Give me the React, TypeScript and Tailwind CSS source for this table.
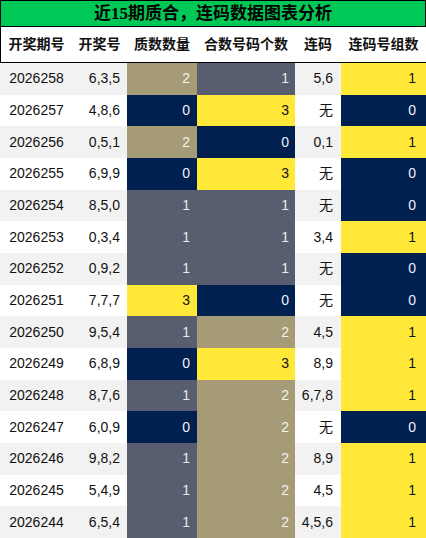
import React from 'react';

type Row = {
  qh: string;
  kj: string;
  zs: number;
  hs: number;
  lm: string;
  zu: number;
};

const rows: Row[] = [
  { qh: '2026258', kj: '6,3,5', zs: 2, hs: 1, lm: '5,6', zu: 1 },
  { qh: '2026257', kj: '4,8,6', zs: 0, hs: 3, lm: '无', zu: 0 },
  { qh: '2026256', kj: '0,5,1', zs: 2, hs: 0, lm: '0,1', zu: 1 },
  { qh: '2026255', kj: '6,9,9', zs: 0, hs: 3, lm: '无', zu: 0 },
  { qh: '2026254', kj: '8,5,0', zs: 1, hs: 1, lm: '无', zu: 0 },
  { qh: '2026253', kj: '0,3,4', zs: 1, hs: 1, lm: '3,4', zu: 1 },
  { qh: '2026252', kj: '0,9,2', zs: 1, hs: 1, lm: '无', zu: 0 },
  { qh: '2026251', kj: '7,7,7', zs: 3, hs: 0, lm: '无', zu: 0 },
  { qh: '2026250', kj: '9,5,4', zs: 1, hs: 2, lm: '4,5', zu: 1 },
  { qh: '2026249', kj: '6,8,9', zs: 0, hs: 3, lm: '8,9', zu: 1 },
  { qh: '2026248', kj: '8,7,6', zs: 1, hs: 2, lm: '6,7,8', zu: 1 },
  { qh: '2026247', kj: '6,0,9', zs: 0, hs: 2, lm: '无', zu: 0 },
  { qh: '2026246', kj: '9,8,2', zs: 1, hs: 2, lm: '8,9', zu: 1 },
  { qh: '2026245', kj: '5,4,9', zs: 1, hs: 2, lm: '4,5', zu: 1 },
  { qh: '2026244', kj: '6,5,4', zs: 1, hs: 2, lm: '4,5,6', zu: 1 },
];

// 0 navy, 1 slate, 2 tan, 3 yellow
const countCls = (n: number) => {
  switch (n) {
    case 0:
      return 'bg-[#002050] text-[#eef0f4]';
    case 1:
      return 'bg-[#585d6f] text-[#e9eaee]';
    case 2:
      return 'bg-[#a59c77] text-[#f4f2ea]';
    default:
      return 'bg-[#ffe838] text-[#111]';
  }
};

const groupCls = (n: number) => (n > 0 ? 'bg-[#ffe838] text-[#111]' : 'bg-[#002050] text-[#eef0f4]');

const App: React.FC = () => {
  return (
    <div
      className="w-[426px] h-[538px] flex flex-col bg-white overflow-hidden"
      style={{ fontFamily: '"Liberation Sans", "Noto Sans CJK SC", sans-serif' }}
    >
      {/* Title */}
      <div
        className="h-[27px] shrink-0 bg-[#00c857] border border-black flex items-center justify-center text-[17px] font-bold text-black leading-none"
        style={{ fontFamily: '"Liberation Serif", "Noto Sans CJK SC", serif' }}
      >
        近15期质合，连码数据图表分析
      </div>

      {/* Header */}
      <div className="h-[36px] shrink-0 flex border-l border-b border-black text-[14px] font-bold text-[#111]">
        <div className="w-[71px] flex items-center justify-center">开奖期号</div>
        <div className="w-[55px] flex items-center justify-center">开奖号</div>
        <div className="w-[70px] flex items-center justify-center">质数数量</div>
        <div className="w-[98px] flex items-center justify-center">合数号码个数</div>
        <div className="w-[46px] flex items-center justify-center">连码</div>
        <div className="w-[85px] flex items-center justify-center">连码号组数</div>
      </div>

      {/* Body */}
      <div className="flex-1 flex flex-col text-[14px] text-[#111]">
        {rows.map((r, i) => {
          const base = i % 2 === 0 ? 'bg-[#f2f2f2]' : 'bg-white';
          return (
            <div key={r.qh} className="flex-1 flex">
              <div className={`w-[72px] flex items-center justify-center pl-[1px] ${base}`}>{r.qh}</div>
              <div className={`w-[55px] flex items-center justify-end pr-[7px] ${base}`}>{r.kj}</div>
              <div className={`w-[70px] flex items-center justify-end pr-[7px] ${countCls(r.zs)}`}>{r.zs}</div>
              <div className={`w-[98px] flex items-center justify-end pr-[6px] ${countCls(r.hs)}`}>{r.hs}</div>
              <div className={`w-[46px] flex items-center justify-end pr-[8px] ${base}`}>{r.lm}</div>
              <div className={`w-[85px] flex items-center justify-end pr-[10px] ${groupCls(r.zu)}`}>{r.zu}</div>
            </div>
          );
        })}
      </div>
    </div>
  );
};

export default App;
